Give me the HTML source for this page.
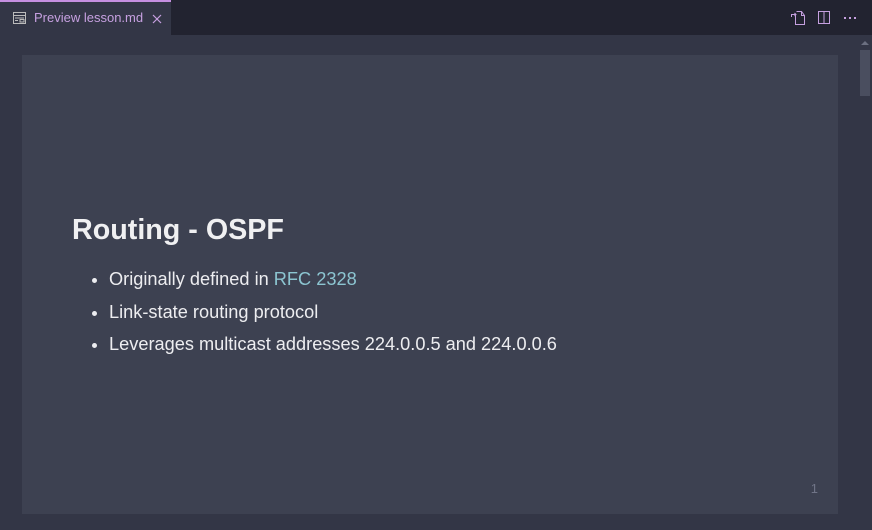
<!DOCTYPE html>
<html><head><style>
body{margin:0;width:872px;height:530px;background:#333646;font-family:"Liberation Sans",sans-serif;overflow:hidden;position:relative}
.bar{position:absolute;left:0;top:0;width:872px;height:35px;background:#222330}
.tab{position:absolute;left:0;top:0;width:171px;height:35px;background:#333646;border-top:2px solid #c58fe0;box-sizing:border-box}
.tab span{position:absolute;left:34px;top:8px;font-size:13px;color:#c6a0e0}
.slide{position:absolute;left:22px;top:55px;width:816px;height:459px;background:#3d4151}
h1{position:absolute;left:50px;top:159px;margin:0;font-size:28.7px;font-weight:bold;color:#f0f0f2}
ul{position:absolute;left:67px;top:213px;margin:0;padding:0 0 0 20px;color:#ededf0;font-size:18.2px}
li{height:32.5px;line-height:22px}
a{color:#8cc5d1;text-decoration:none}
.num{position:absolute;right:20px;bottom:18px;font-size:13px;color:#707487}
.thumb{position:absolute;left:860px;top:50px;width:10px;height:46px;background:#4a4e5f}
</style></head><body>
<div class="bar"></div>
<div class="tab">
<svg style="position:absolute;left:13px;top:10px" width="14" height="13" viewBox="0 0 14 13" fill="none" stroke="#bbb" stroke-width="1"><rect x="0.5" y="0.5" width="12" height="11"/><line x1="0.5" y1="3.5" x2="12.5" y2="3.5"/><line x1="2" y1="6" x2="11" y2="6"/><line x1="2" y1="8.5" x2="5" y2="8.5"/><rect x="7" y="7.5" width="4" height="2.5"/></svg>
<span>Preview lesson.md</span>
<svg style="position:absolute;left:152px;top:12px" width="10" height="10" stroke="#c6a0e0" stroke-width="1.2"><line x1="1" y1="1" x2="9" y2="9"/><line x1="9" y1="1" x2="1" y2="9"/></svg>
</div>
<svg style="position:absolute;left:790px;top:10px" width="16" height="16" fill="none" stroke="#c6a0e0" stroke-width="1"><path d="M5.5 5.5V14.5H14.5V5.5L11.5 1.5H6.5"/><path d="M11.5 1.5V5.5H14.5"/><path d="M1.5 7V4.5H6M4.5 3L6 4.5L4.5 6"/></svg>
<svg style="position:absolute;left:817px;top:10px" width="14" height="15" fill="none" stroke="#c6a0e0" stroke-width="1"><rect x="1.5" y="1.5" width="11" height="12"/><line x1="7" y1="1.5" x2="7" y2="13.5"/></svg>
<svg style="position:absolute;left:843px;top:16px" width="14" height="4" fill="#c6a0e0"><rect x="1" y="1" width="2" height="2"/><rect x="6" y="1" width="2" height="2"/><rect x="11" y="1" width="2" height="2"/></svg>
<div class="slide">
<h1>Routing - OSPF</h1>
<ul><li>Originally defined in <a>RFC 2328</a></li><li>Link-state routing protocol</li><li>Leverages multicast addresses 224.0.0.5 and 224.0.0.6</li></ul>
<div class="num">1</div>
</div>
<svg style="position:absolute;left:861px;top:40px" width="8" height="6"><path d="M0 5L4 1L8 5Z" fill="#6b6f80"/></svg>
<div class="thumb"></div>
</body></html>
